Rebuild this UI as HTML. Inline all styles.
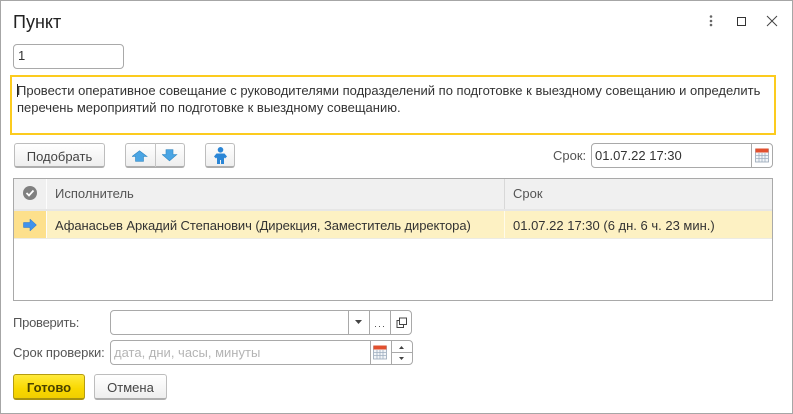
<!DOCTYPE html>
<html><head><meta charset="utf-8">
<style>
html,body{margin:0;padding:0;background:#fff}
#w{position:relative;width:793px;height:414px;overflow:hidden;background:#fff;font-family:"Liberation Sans",Arial,sans-serif;font-size:13px;color:#333}
#w div,#w span.t{position:absolute;box-sizing:border-box;white-space:nowrap}
.t{position:absolute;white-space:nowrap;line-height:16px}
.in{background:#fff;border:1px solid #a9a9a9;border-radius:4px}
.btn{border:1px solid #bdbdbd;border-bottom:2px solid #aeaeae;border-radius:3px;background:linear-gradient(#fff,#f5f5f5 60%,#eee);text-align:center;line-height:25px;color:#444}
svg{position:absolute;display:block}
</style></head><body>
<div id="w">
<div style="left:0;top:0;width:793px;height:414px;border:1px solid #a6a6a6"></div>

<span class="t" style="left:13px;top:11px;font-size:18px;line-height:22px;color:#222">Пункт</span>
<svg style="left:707px;top:14px" width="8" height="14"><circle cx="4" cy="2.500" r="1.300" fill="#666"/><circle cx="4" cy="7" r="1.300" fill="#666"/><circle cx="4" cy="11" r="1.300" fill="#666"/></svg>
<svg style="left:736px;top:16px" width="12" height="11"><rect x="1.500" y="1.500" width="8" height="8" fill="none" stroke="#333" stroke-width="1"/></svg>
<svg style="left:766px;top:15px" width="12" height="12"><path d="M1 1L11 11M11 1L1 11" stroke="#444" stroke-width="1" fill="none"/></svg>

<div class="in" style="left:13px;top:44px;width:111px;height:25px"></div>
<span class="t" style="left:18px;top:48px;font-size:13px;color:#333">1</span>

<div style="left:10px;top:75px;width:766px;height:60px;border:2px solid #fccb1e"></div>
<div style="left:17px;top:84px;width:1px;height:13px;background:#222"></div>
<span class="t" style="left:17px;top:83px;color:#333">Провести оперативное совещание с руководителями подразделений по подготовке к выездному совещанию и определить</span>
<span class="t" style="left:17px;top:100px;color:#333">перечень мероприятий по подготовке к выездному совещанию.</span>

<div class="btn" style="left:14px;top:143px;width:91px;height:25px">Подобрать</div>

<div class="btn" style="left:125px;top:143px;width:60px;height:25px"></div>
<div style="left:155px;top:143px;width:1px;height:24px;background:#c4c4c4"></div>
<svg style="left:132px;top:150px" width="16" height="12"><path d="M7.500 .8L15 6.500H11.500V11.300H3.500V6.500H0Z" fill="#4aa5e4" stroke="#2f86c2" stroke-width=".6"/></svg>
<svg style="left:162px;top:149px" width="16" height="13"><path d="M4 .7H11V5.500H14.800L7.500 11.800L.2 5.500H4Z" fill="#4aa5e4" stroke="#2f86c2" stroke-width=".6"/></svg>

<div class="btn" style="left:205px;top:143px;width:30px;height:25px"></div>
<svg style="left:213px;top:146px" width="15" height="19"><circle cx="7.500" cy="3.800" r="2.800" fill="#2b86d6"/><path d="M3.500 7.500H11.500L14 10.500L12 12.500L11 11.500V18H8V14H7V18H4V11.500L3 12.500L1 10.500Z" fill="#2b86d6"/></svg>

<span class="t" style="left:553px;top:148px;color:#555">Срок:</span>
<div class="in" style="left:591px;top:143px;width:182px;height:25px"></div>
<div style="left:751px;top:143px;width:1px;height:25px;background:#a9a9a9"></div>
<span class="t" style="left:595px;top:148px;color:#333">01.07.22 17:30</span>
<svg style="left:755px;top:148px" width="15" height="15"><rect x=".5" y="1" width="13" height="13" fill="#f2f5f8" stroke="#97a6b6" stroke-width=".8"/><rect x=".5" y=".5" width="13" height="4" fill="#e2502f"/><path d="M1 7.500H13M1 10.500H13M4 5V14M7 5V14M10 5V14" stroke="#9fafc0" stroke-width=".8"/></svg>

<div style="left:13px;top:178px;width:760px;height:123px;border:1px solid #a9a9a9;background:#fff"></div>
<div style="left:14px;top:179px;width:758px;height:30px;background:#f0f0f0"></div>
<div style="left:46px;top:179px;width:1px;height:60px;background:#fdfdfd"></div>
<div style="left:504px;top:179px;width:1px;height:30px;background:#d8d8d8"></div>
<div style="left:14px;top:209px;width:758px;height:2px;background:#e6e6e6"></div>
<div style="left:14px;top:211px;width:32px;height:27px;background:#fde08c"></div>
<div style="left:47px;top:211px;width:725px;height:27px;background:#fdf1c3"></div>
<div style="left:504px;top:211px;width:1px;height:27px;background:#fffbea"></div>
<div style="left:14px;top:238px;width:758px;height:1px;background:#ecebe4"></div>

<svg style="left:23px;top:186px" width="14" height="14"><circle cx="7" cy="7" r="7" fill="#808080"/><path d="M3.500 7L6 9.500L10.500 4.500" stroke="#fff" stroke-width="1.800" fill="none"/></svg>
<span class="t" style="left:55px;top:186px;color:#555">Исполнитель</span>
<span class="t" style="left:513px;top:186px;color:#555">Срок</span>

<svg style="left:23px;top:218px" width="14" height="14"><path d="M0.500 4.500H7V1L13.500 7L7 13V9.500H0.500Z" fill="#3f92ec" stroke="#2a74c4" stroke-width=".5"/></svg>
<span class="t" style="left:55px;top:218px;letter-spacing:-.08px;color:#333">Афанасьев Аркадий Степанович (Дирекция, Заместитель директора)</span>
<span class="t" style="left:513px;top:218px;color:#333">01.07.22 17:30 (6 дн. 6 ч. 23 мин.)</span>

<span class="t" style="left:13px;top:315px;letter-spacing:-.25px;color:#555">Проверить:</span>
<div class="in" style="left:110px;top:310px;width:302px;height:25px"></div>
<div style="left:348px;top:310px;width:1px;height:25px;background:#a9a9a9"></div>
<div style="left:369px;top:310px;width:1px;height:25px;background:#a9a9a9"></div>
<div style="left:390px;top:310px;width:1px;height:25px;background:#a9a9a9"></div>
<svg style="left:355px;top:320px" width="8" height="5"><path d="M0 0H7L3.500 4Z" fill="#444"/></svg>
<svg style="left:375px;top:326px" width="12" height="3"><rect x="0" y="0" width="1" height="1" fill="#555"/><rect x="4" y="0" width="1" height="1" fill="#555"/><rect x="8" y="0" width="1" height="1" fill="#555"/></svg>
<svg style="left:396px;top:317px" width="12" height="12"><path d="M3.500 7.500V1H10.500V7.500H3.500Z" fill="none" stroke="#444"/><path d="M3.500 3.500H1V10.500H7.500V7.500" fill="none" stroke="#444"/></svg>

<span class="t" style="left:13px;top:345px;letter-spacing:-.05px;color:#555">Срок проверки:</span>
<div class="in" style="left:110px;top:340px;width:303px;height:25px"></div>
<span class="t" style="left:114px;top:345px;color:#b4b4b4">дата, дни, часы, минуты</span>
<div style="left:370px;top:340px;width:1px;height:25px;background:#a9a9a9"></div>
<div style="left:391px;top:340px;width:1px;height:25px;background:#a9a9a9"></div>
<div style="left:391px;top:352px;width:22px;height:1px;background:#a9a9a9"></div>
<svg style="left:373px;top:345px" width="15" height="15"><rect x=".5" y="1" width="13" height="13" fill="#f2f5f8" stroke="#97a6b6" stroke-width=".8"/><rect x=".5" y=".5" width="13" height="4" fill="#e2502f"/><path d="M1 7.500H13M1 10.500H13M4 5V14M7 5V14M10 5V14" stroke="#9fafc0" stroke-width=".8"/></svg>
<svg style="left:399px;top:346px" width="6" height="4"><path d="M0 3H5L2.500 0Z" fill="#444"/></svg>
<svg style="left:399px;top:357px" width="6" height="4"><path d="M0 0H5L2.500 3Z" fill="#444"/></svg>

<div style="left:13px;top:374px;width:72px;height:26px;border:1px solid #b59c10;border-bottom:2px solid #a89210;border-radius:3px;background:linear-gradient(#ffea3c,#f9d800 60%,#f1cf00);text-align:center;line-height:26px;font-weight:bold;color:#4a4200">Готово</div>
<div class="btn" style="left:94px;top:374px;width:73px;height:26px;line-height:26px">Отмена</div>
</div>
</body></html>
